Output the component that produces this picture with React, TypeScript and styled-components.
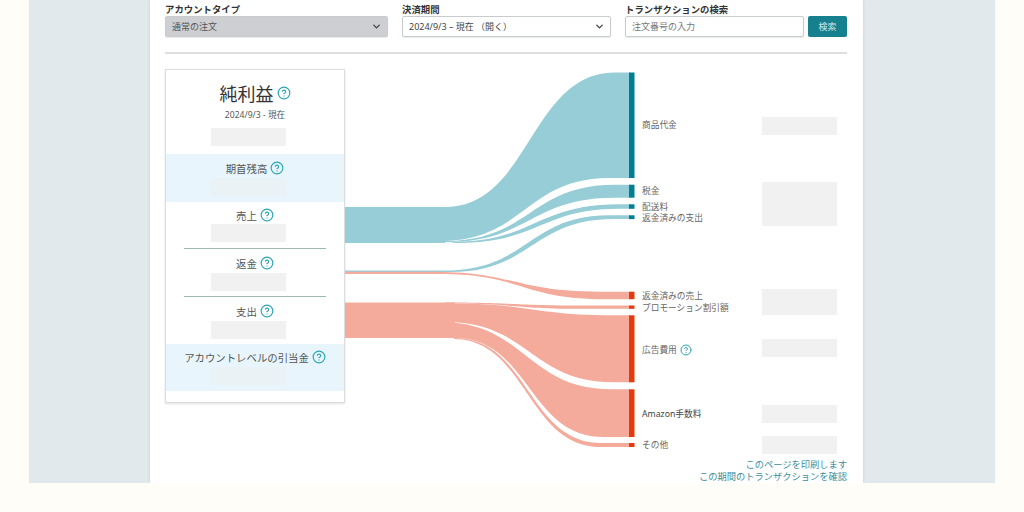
import React from "react";
import styled, {createGlobalStyle} from "styled-components";
import {ChevronDown, CircleHelp} from "lucide-react";

const GlobalStyle = createGlobalStyle`
    html, body {
        margin: 0;
        height: 100%;
        overflow: hidden;
        background: #fffdf7;
        font-family: "Noto Sans", "Noto Sans CJK JP", sans-serif;
    }
`;

const Frame = styled.div`
    margin: 0 29px;
    height: 483px;
    background: #e2e9ec;
    padding-left: 121px;
    overflow: hidden;
`;

const Panel = styled.main`
    box-sizing: border-box;
    width: 713px;
    height: 483px;
    background: #fff;
    padding: 3px 16px 0 15px;
    box-shadow: 0 0 3px rgba(0, 0, 0, 0.12);
`;

const Toolbar = styled.div`
    display: flex;
    gap: 14px;
    padding-bottom: 15px;
    border-bottom: 2px solid #dedede;
`;

const Field = styled.div<{ $width: number }>`
    width: ${({$width}) => $width}px;
`;

const FieldLabel = styled.label`
    display: block;
    height: 13px;
    font-size: 9.4px;
    line-height: 13px;
    font-weight: 700;
    color: #333;
`;

const Select = styled.div<{ $disabled?: boolean }>`
    box-sizing: border-box;
    height: 21px;
    display: flex;
    align-items: center;
    justify-content: space-between;
    padding: 0 5px 0 6px;
    font-size: 9px;
    color: ${({$disabled}) => $disabled ? "#555" : "#444"};
    background: ${({$disabled}) => $disabled ? "#cdcfd2" : "#fff"};
    border: 1px solid #c9cccc;
    border-radius: 2px;
    box-shadow: 0 1px 1px rgba(0, 0, 0, 0.08);
`;

const SearchRow = styled.div`
    display: flex;
    gap: 4px;
`;

const SearchInput = styled.div`
    box-sizing: border-box;
    width: 179px;
    height: 21px;
    display: flex;
    align-items: center;
    padding: 0 6px;
    font-size: 9px;
    color: #777;
    background: #fff;
    border: 1px solid #c9cccc;
    border-radius: 2px;
    box-shadow: 0 1px 1px rgba(0, 0, 0, 0.08);
`;

const SearchButton = styled.button`
    width: 39px;
    height: 21px;
    padding: 0;
    font-family: inherit;
    font-size: 9px;
    color: #cfe8ec;
    background: #17808f;
    border: none;
    border-radius: 2px;
`;

const Report = styled.section`
    display: flex;
    margin-top: 15px;
    height: 385px;
`;

const Card = styled.aside`
    box-sizing: border-box;
    flex: none;
    width: 180px;
    height: 334px;
    background: #fff;
    border: 1px solid #dcdcdc;
    box-shadow: 0 1px 2px rgba(0, 0, 0, 0.12);
`;

const CardHeader = styled.header`
    display: flex;
    flex-direction: column;
    align-items: center;
    padding: 9px 0 8px;
`;

const Title = styled.h2`
    display: flex;
    align-items: center;
    gap: 3px;
    margin: 0;
    height: 28px;
    font-size: 18px;
    font-weight: 400;
    color: #333;
`;

const DateText = styled.p`
    margin: 2px 0 0;
    font-size: 8.6px;
    line-height: 12px;
    color: #555;
`;

const Block = styled.div<{ $tint?: boolean; $top: number; $bottom: number }>`
    display: flex;
    flex-direction: column;
    align-items: center;
    padding: ${({$top, $bottom}) => `${$top}px 0 ${$bottom}px`};
    background: ${({$tint}) => $tint ? "#e8f5fc" : "transparent"};
`;

const BlockLabel = styled.div`
    display: flex;
    align-items: center;
    gap: 3px;
    height: 14px;
    font-size: 10.4px;
    color: #555;
`;

const Masked = styled.div<{ $gap: number; $tint?: boolean }>`
    align-self: flex-start;
    width: 75px;
    height: 18px;
    margin: ${({$gap}) => $gap}px 0 0 45px;
    background: ${({$tint}) => $tint ? "#eaf2f6" : "#f1f1f1"};
`;

const Rule = styled.hr<{ $gap: number }>`
    width: 142px;
    margin: ${({$gap}) => $gap}px 0 0 18px;
    height: 1px;
    border: none;
    background: #9fb8b5;
`;

const Chart = styled.svg`
    flex: none;
    display: block;
    width: 290px;
    height: 385px;
`;

const Legend = styled.div`
    flex: none;
    width: 120px;
    margin-left: 7px;
`;

const LegendItem = styled.div<{ $gap: number; $dark?: boolean }>`
    display: flex;
    align-items: center;
    gap: 3px;
    height: 11px;
    margin-top: ${({$gap}) => $gap}px;
    font-size: 8.7px;
    white-space: nowrap;
    color: ${({$dark}) => $dark ? "#444" : "#666"};
`;

const Values = styled.div`
    flex: none;
    width: 75px;
`;

const ValueMask = styled.div<{ $gap: number; $height: number }>`
    height: ${({$height}) => $height}px;
    margin-top: ${({$gap}) => $gap}px;
    background: #f1f1f1;
`;

const Links = styled.nav`
    margin-top: 5px;
    text-align: right;
    font-size: 9.25px;
    line-height: 12px;
    color: #3a8f9d;
`;

const Help = ({size = 14}: { size?: number }) => (
    <CircleHelp size={size} color="#2aa5b4" strokeWidth={2} />
);

const legend = [
    {label: "商品代金", gap: 50},
    {label: "税金", gap: 55},
    {label: "配送料", gap: 5},
    {label: "返金済みの支出", gap: 0},
    {label: "返金済みの売上", gap: 67},
    {label: "プロモーション割引額", gap: 1},
    {label: "広告費用", gap: 31, help: true},
    {label: "Amazon手数料", gap: 53, dark: true},
    {label: "その他", gap: 20},
];

const valueMasks = [
    {gap: 48, height: 18},
    {gap: 47, height: 44},
    {gap: 63, height: 26},
    {gap: 24, height: 18},
    {gap: 48, height: 18},
    {gap: 13, height: 18},
];

const tealBars = [[72.5, 105.5], [184.7, 13], [204.3, 4.5], [215.3, 3.8]];
const redBars = [[291.7, 7.5], [305.5, 3.3], [315.3, 67], [389.3, 47.7], [443, 4]];

// left part of each group is one solid band, the flows split after it
const tealFlows = [
    "M345 207 H445 V243 H345 Z",
    "M445 207 C530 207 530 72.5 615 72.5 H630 V178 H610 C525 178 525 241 440 241 Z",
    "M445 241 C530 241 530 184.7 615 184.7 H630 V197.7 H615 C530 197.7 530 242 445 242 Z",
    "M450 242 C535 242 535 204.3 620 204.3 H630 V208.8 H620 C540 208.8 540 243 455 243 Z",
    "M345 270.5 H445 C528 270.5 528 215.3 610 215.3 H630 V219 H614 C532 219 532 272 450 272 H345 Z",
];

const redFlows = [
    "M345 271.7 H430 C515 271.7 515 291.7 600 291.7 H630 V299.2 H605 C522 299.2 522 274 440 274 H345 Z",
    "M345 302.5 H455 V338 H345 Z",
    "M445 302.5 C515 302.5 515 305.5 585 305.5 H630 V308.8 H585 C515 308.8 515 303.5 445 303.5 Z",
    "M450 303.5 C533 303.5 533 315.3 615 315.3 H630 V382.3 H615 C530 382.3 530 322 445 322 Z",
    "M440 322 C526 322 526 389.3 612 389.3 H630 V437 H603 C529 437 529 338 455 338 Z",
    "M455 338 C528 338 528 443 601 443 H630 V447 H601 C527 447 527 339 453 339 Z",
];

function App() {
    return (
        <>
            <GlobalStyle />
            <Frame>
                <Panel>
                    <Toolbar>
                        <Field $width={223}>
                            <FieldLabel>アカウントタイプ</FieldLabel>
                            <Select $disabled>
                                通常の注文
                                <ChevronDown size={11} color="#444" strokeWidth={3} />
                            </Select>
                        </Field>
                        <Field $width={209}>
                            <FieldLabel>決済期間</FieldLabel>
                            <Select>
                                2024/9/3 – 現在 （開く）
                                <ChevronDown size={11} color="#444" strokeWidth={3} />
                            </Select>
                        </Field>
                        <Field $width={222}>
                            <FieldLabel>トランザクションの検索</FieldLabel>
                            <SearchRow>
                                <SearchInput>注文番号の入力</SearchInput>
                                <SearchButton type="button">検索</SearchButton>
                            </SearchRow>
                        </Field>
                    </Toolbar>

                    <Report>
                        <Card>
                            <CardHeader>
                                <Title>純利益 <Help /></Title>
                                <DateText>2024/9/3 - 現在</DateText>
                                <Masked $gap={7} />
                            </CardHeader>
                            <Block $tint $top={7} $bottom={6}>
                                <BlockLabel>期首残高 <Help /></BlockLabel>
                                <Masked $gap={3} $tint />
                            </Block>
                            <Block $top={6} $bottom={0}>
                                <BlockLabel>売上 <Help /></BlockLabel>
                                <Masked $gap={2} />
                            </Block>
                            <Rule $gap={6} />
                            <Block $top={7} $bottom={0}>
                                <BlockLabel>返金 <Help /></BlockLabel>
                                <Masked $gap={3} />
                            </Block>
                            <Rule $gap={5} />
                            <Block $top={7} $bottom={5}>
                                <BlockLabel>支出 <Help /></BlockLabel>
                                <Masked $gap={3} />
                            </Block>
                            <Block $tint $top={6} $bottom={6}>
                                <BlockLabel>アカウントレベルの引当金 <Help /></BlockLabel>
                                <Masked $gap={3} $tint />
                            </Block>
                        </Card>

                        <Chart viewBox="345 69 290 385">
                            {tealFlows.map((d) => <path key={d} d={d} fill="#96cdd6" />)}
                            {redFlows.map((d) => <path key={d} d={d} fill="#f4ab9b" />)}
                            {tealBars.map(([y, h]) => <rect key={y} x={629} y={y} width={5.5} height={h} fill="#007f93" />)}
                            {redBars.map(([y, h]) => <rect key={y} x={629} y={y} width={5.5} height={h} fill="#e13c11" />)}
                        </Chart>

                        <Legend>
                            {legend.map((item) => (
                                <LegendItem key={item.label} $gap={item.gap} $dark={item.dark}>
                                    {item.label}
                                    {item.help && <Help size={12} />}
                                </LegendItem>
                            ))}
                        </Legend>

                        <Values>
                            {valueMasks.map((mask) => (
                                <ValueMask key={mask.gap + "-" + mask.height} $gap={mask.gap} $height={mask.height} />
                            ))}
                        </Values>
                    </Report>

                    <Links>
                        <div>このページを印刷します</div>
                        <div>この期間のトランザクションを確認</div>
                    </Links>
                </Panel>
            </Frame>
        </>
    );
}

export default App;
